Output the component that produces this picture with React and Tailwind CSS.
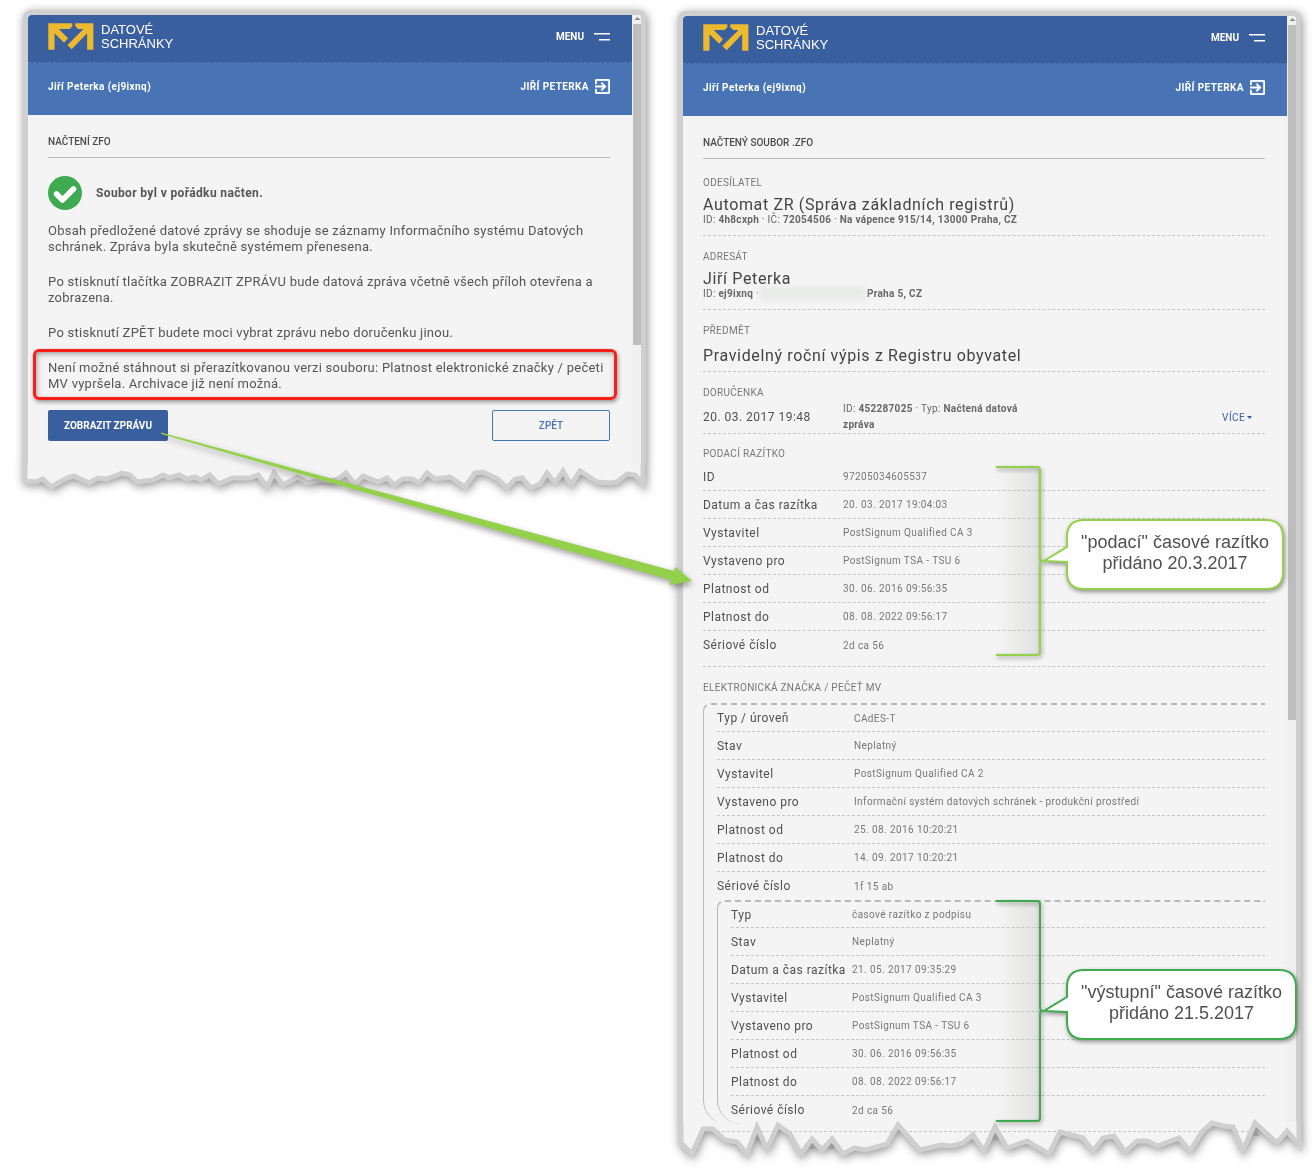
import clsx from 'clsx';

const STAMP = [
  ['ID', '97205034605537'],
  ['Datum a čas razítka', '20. 03. 2017 19:04:03'],
  ['Vystavitel', 'PostSignum Qualified CA 3'],
  ['Vystaveno pro', 'PostSignum TSA - TSU 6'],
  ['Platnost od', '30. 06. 2016 09:56:35'],
  ['Platnost do', '08. 08. 2022 09:56:17'],
  ['Sériové číslo', '2d ca 56'],
];

const SEAL = [
  ['Typ / úroveň', 'CAdES-T'],
  ['Stav', 'Neplatný'],
  ['Vystavitel', 'PostSignum Qualified CA 2'],
  ['Vystaveno pro', 'Informační systém datových schránek - produkční prostředí'],
  ['Platnost od', '25. 08. 2016 10:20:21'],
  ['Platnost do', '14. 09. 2017 10:20:21'],
  ['Sériové číslo', '1f 15 ab'],
];

const SEAL_STAMP = [
  ['Typ', 'časové razítko z podpisu'],
  ['Stav', 'Neplatný'],
  ['Datum a čas razítka', '21. 05. 2017 09:35:29'],
  ['Vystavitel', 'PostSignum Qualified CA 3'],
  ['Vystaveno pro', 'PostSignum TSA - TSU 6'],
  ['Platnost od', '30. 06. 2016 09:56:35'],
  ['Platnost do', '08. 08. 2022 09:56:17'],
  ['Sériové číslo', '2d ca 56'],
];

// Torn paper edges
const TEAR_LEFT =
  '25,481 35,482 43,479 51,487 67,478 74,476 89,483 98,478 107,479 122,473 130,475 137,482 153,480 163,475 169,478 179,475 187,479 195,477 201,480 210,475 218,484 233,478 250,478 258,475 267,487 274,473 283,485 298,477 307,483 320,480 330,481 338,479 346,473 355,484 363,476 378,482 387,478 394,485 403,479 412,479 419,483 427,473 435,479 450,477 465,487 475,473 483,472 498,479 507,488 515,479 522,478 531,488 540,484 547,473 555,483 563,471 571,485 580,471 597,482 610,483 617,482 627,474 635,475 643,484';
const TEAR_RIGHT =
  '681,1143 692,1154 703,1129 713,1129 725,1140 737,1142 747,1154 757,1127 767,1149 778,1125 790,1134 801,1154 812,1139 822,1150 832,1139 843,1154 854,1148 866,1150 887,1144 898,1125 920,1150 941,1145 952,1146 963,1143 973,1135 984,1151 995,1127 1007,1148 1027,1141 1049,1154 1060,1132 1083,1138 1093,1151 1103,1138 1114,1136 1125,1152 1137,1141 1147,1141 1158,1146 1179,1138 1190,1151 1202,1132 1212,1123 1223,1126 1233,1127 1243,1150 1255,1123 1277,1143 1287,1131 1299,1145';

// ─── Icons ───────────────────────────────────────────────────────────────────
function Logo() {
  return (
    <svg viewBox="0 0 138 82" className="h-[27px] w-[46px]" fill="#ecb92f" aria-hidden="true">
      <path d="M0 1H73V10L65 18H32L60 46L48 60L19 31V81H0Z" />
      <path d="M82 1H137V81H118V31L71 80L58 67L107 18H91L82 10Z" />
    </svg>
  );
}

function ExitIcon() {
  return (
    <svg viewBox="3 3 18 18" className="size-[15px]" fill="currentColor" aria-hidden="true">
      <path
        d="M10.09 15.59 11.5 17l5-5-5-5-1.41 1.41L12.67 11H3v2h9.67zM19 3H5c-1.11 0-2 .9-2 2v4h2V5h14v14H5v-4H3v4c0 1.1.89 2 2 2h14c1.1 0 2-.9 2-2V5c0-1.1-.9-2-2-2z"
        stroke="currentColor"
        strokeWidth="0.5"
      />
    </svg>
  );
}

function CheckIcon() {
  return (
    <svg viewBox="0 0 34 34" className="size-[34px] shrink-0" aria-hidden="true">
      <circle cx="17" cy="17" r="17" fill="#3faa50" />
      <path d="M8.500 18 14.500 24 25.500 13" fill="none" stroke="#fff" strokeWidth="5.500" strokeLinecap="round" strokeLinejoin="round" />
    </svg>
  );
}

// ─── Window frame ────────────────────────────────────────────────────────────
function Tear({ points, viewBox, top, className, children }) {
  const pts = points.split(' ');
  const first = pts[0].split(',')[0];
  const last = pts[pts.length - 1].split(',')[0];
  return (
    <svg viewBox={viewBox} preserveAspectRatio="none" className={clsx('block w-full overflow-visible', className)} aria-hidden="true">
      <polygon points={`${first},${top} ${points} ${last},${top}`} fill="#f4f4f4" />
      {children}
      <polyline points={`${first},${top} ${points} ${last},${top}`} fill="none" stroke="#cfcfcf" strokeWidth="5" />
    </svg>
  );
}

function Window({ title, thumb, tear, className, children }) {
  return (
    <section className={clsx('min-w-0 drop-shadow-[1px_2px_5px_rgba(0,0,0,0.45)]', className)}>
      <div className="flex rounded-t-lg border-x-5 border-t-5 border-[#cfcfcf] bg-[#f4f4f4]">
        <div className="min-w-0 flex-1">
          <header className="text-[10px] font-bold text-white">
            <div className="flex h-12 items-center justify-between rounded-tl border-b border-dashed border-[#5478b4] bg-[#3a5f9f] pr-[22px] pb-1 pl-5">
              <a href="#" className="flex items-center gap-[7px]">
                <Logo />
                <span className="font-['Liberation_Sans',sans-serif] text-[13px] leading-[14px] font-normal">
                  DATOVÉ<br />SCHRÁNKY
                </span>
              </a>
              <button className="flex items-center gap-2.5 font-bold">
                MENU
                <svg viewBox="0 0 16 10" className="h-2.5 w-4" fill="#fff" aria-hidden="true">
                  <path d="M0 1h16v1.500H0zM5 7h11v1.500H5z" />
                </svg>
              </button>
            </div>
            <div className="flex h-[52px] items-center justify-between bg-[#4874b6] pr-[22px] pb-1.5 pl-5">
              <span className="tracking-[0.04em]">Jiří Peterka (ej9ixnq)</span>
              <button className="flex items-center gap-1.5 font-bold tracking-[0.04em]">
                JIŘÍ PETERKA
                <ExitIcon />
              </button>
            </div>
          </header>
          <div className="pr-[22px] pl-5">
            <h1 className="flex h-[43px] items-center border-b border-[#b9b9b9] pt-[11px] text-[10px] font-medium text-[#4a4a4a]">{title}</h1>
            {children}
          </div>
        </div>
        <div className="w-[9px] rounded-tr bg-[#f0f0f0] pl-px">
          <svg viewBox="0 0 8 9" className="block h-[9px] w-2" aria-hidden="true">
            <path d="M1.500 5 4.500 2 7.500 5z" fill="#8d8d8d" />
          </svg>
          <div className={clsx('bg-[#bdbdbd]', thumb)} />
        </div>
      </div>
      {tear}
    </section>
  );
}

// ─── Detail rows ─────────────────────────────────────────────────────────────
function Label({ children }) {
  return <h2 className="text-[10px] leading-4 tracking-[0.03em] text-[#777]">{children}</h2>;
}

function Rows({ rows, labelWidth, firstHeight = 'h-7' }) {
  return rows.map(([label, value], i) => (
    <div
      key={label}
      className={clsx(
        'flex items-center',
        i === 0 ? firstHeight : 'h-7',
        i < rows.length - 1 && 'border-b border-dashed border-[#c6c6c6]',
      )}
    >
      <dt className={clsx('shrink-0 text-xs tracking-[0.04em] whitespace-nowrap text-[#505050]', labelWidth)}>{label}</dt>
      <dd className="text-[10px] tracking-[0.04em] text-[#777]">{value}</dd>
    </div>
  ));
}

function Section({ label, children, className }) {
  return (
    <section className={clsx('border-b border-dashed border-[#c6c6c6]', className)}>
      <Label>{label}</Label>
      {children}
    </section>
  );
}

function Headline({ children, className }) {
  return <p className={clsx('text-base leading-5 tracking-[0.04em] text-[#444]', className)}>{children}</p>;
}

function Group({ children, className }) {
  return (
    <div className={clsx('rounded-tl-lg rounded-bl-[24px] border-t-2 border-l border-[#b9b9b9] pl-[13px] [border-top-style:dashed]', className)}>
      {children}
    </div>
  );
}

// Bracket around a block of rows with a speech bubble pointing at its middle
function Callout({ id, color, height, width, className, children }) {
  const mid = 6 + height / 2;
  const end = 6 + height;
  const top = mid - 41;
  const bottom = mid + 28;
  const right = 77 + width;
  return (
    <div className={clsx('absolute -right-[35px] w-[310px]', className)}>
      <svg width="310" height={height + 14} className="block overflow-visible" aria-hidden="true">
        <defs>
          <linearGradient id={id}>
            <stop offset="0" stopColor="#b4bcae" stopOpacity="0" />
            <stop offset="1" stopColor="#b4b8b2" stopOpacity="0.3" />
          </linearGradient>
        </defs>
        <rect x="6" y="6" width="44" height={height} fill={`url(#${id})`} />
        <g className="drop-shadow-[1px_2px_2px_rgba(0,0,0,0.4)]" stroke={color}>
          <path
            d={`M6 6H47Q50 6 50 9V${mid - 3}Q50 ${mid} 53 ${mid}Q50 ${mid} 50 ${mid + 3}V${end - 3}Q50 ${end} 47 ${end}H6`}
            fill="none"
            strokeWidth="2"
          />
          <path
            d={`M${77 + 17} ${top}H${right - 17}Q${right} ${top} ${right} ${top + 17}V${bottom - 17}Q${right} ${bottom} ${right - 17} ${bottom}H94Q77 ${bottom} 77 ${bottom - 17}V${mid + 1}L54 ${mid}L77 ${mid - 14}V${top + 17}Q77 ${top} 94 ${top}Z`}
            fill="#fff"
            strokeWidth="2"
          />
        </g>
      </svg>
      <p
        className="absolute text-center font-['Liberation_Sans',sans-serif] text-lg leading-[21px] text-[#505050]"
        style={{ left: 77, top: top + 12, width }}
      >
        {children}
      </p>
    </div>
  );
}

export default function App() {
  return (
    <main className="relative grid min-h-screen grid-cols-2 items-start gap-8 bg-white pt-2.5 pr-[11px] pl-[23px] font-[Roboto,sans-serif]">
      <Window
        title="NAČTENÍ ZFO"
        thumb="h-[321px]"
        tear={<Tear points={TEAR_LEFT} viewBox="23 465 623 30" top={464} className="h-[30px]" />}
      >
        <div className="mt-[18px] flex items-center gap-3.5 text-xs font-bold tracking-[0.03em] text-[#555]">
          <CheckIcon />
          Soubor byl v pořádku načten.
        </div>
        <div className="mt-[13px] space-y-[19px] text-[13px] leading-4 tracking-[0.02em] text-[#555]">
          <p>
            Obsah předložené datové zprávy se shoduje se záznamy Informačního systému Datových
            schránek. Zpráva byla skutečně systémem přenesena.
          </p>
          <p>Po stisknutí tlačítka ZOBRAZIT ZPRÁVU bude datová zpráva včetně všech příloh otevřena a zobrazena.</p>
          <p>Po stisknutí ZPĚT budete moci vybrat zprávu nebo doručenku jinou.</p>
          <p className="relative">
            Není možné stáhnout si přerazítkovanou verzi souboru: Platnost elektronické značky / pečeti
            MV vypršela. Archivace již není možná.
            <span className="absolute -top-[11px] -right-[7px] -bottom-2 -left-[15px] rounded-md border-3 border-[#fa1d1a] shadow-[1px_2px_4px_rgba(0,0,0,0.4),inset_1px_2px_5px_rgba(0,0,0,0.35)]" />
          </p>
        </div>
        <div className="mt-[18px] flex justify-between pb-6 text-[10px]">
          <button className="h-[31px] w-[120px] rounded-xs bg-[#3a5f9f] font-bold text-white">ZOBRAZIT ZPRÁVU</button>
          <button className="h-[31px] w-[118px] rounded-xs border border-[#4874b6] font-medium text-[#4874b6]">ZPĚT</button>
        </div>
      </Window>

      <Window
        title="NAČTENÝ SOUBOR .ZFO"
        thumb="h-[695px]"
        className="mt-px"
        tear={
          <Tear points={TEAR_RIGHT} viewBox="678 1124 623 38" top={1122} className="h-[38px]">
            <path d="M717 1131.500H750M761 1131.500H774M784 1131.500H892M904 1131.500H992M998 1131.500H1200M1236 1131.500H1250M1262 1131.500H1265" stroke="#c6c6c6" strokeDasharray="3 2" />
            <path d="M757 1132l3 8h-6zM812 1144l3 5h-6zM832 1144l3 5h-6zM995 1132l3 8h-6zM1255 1128l4 8h-6z" fill="#9b9b9b" />
          </Tear>
        }
      >
        <Section label="ODESÍLATEL" className="pt-4 pb-2.5">
          <Headline className="mt-1">Automat ZR (Správa základních registrů)</Headline>
          <p className="text-[10px] leading-[10px] tracking-[0.03em] text-[#666]">
            ID: <b>4h8cxph</b> · IČ: <b>72054506</b> · <b>Na vápence 915/14, 13000 Praha, CZ</b>
          </p>
        </Section>
        <Section label="ADRESÁT" className="pt-[13px] pb-2.5">
          <Headline className="mt-1">Jiří Peterka</Headline>
          <p className="flex items-center text-[10px] leading-[10px] tracking-[0.03em] text-[#666]">
            <span>ID: <b>ej9ixnq</b> ·</span>
            <span className="mx-px -my-1 h-3.5 w-[106px] bg-[#e9ebe9] blur-[2px]" />
            <b>Praha 5, CZ</b>
          </p>
        </Section>
        <Section label="PŘEDMĚT" className="pt-[13px] pb-[5px]">
          <Headline className="mt-[7px]">Pravidelný roční výpis z Registru obyvatel</Headline>
        </Section>
        <Section label="DORUČENKA" className="pt-[13px]">
          <div className="flex items-center">
            <p className="w-[140px] text-xs tracking-[0.04em] text-[#505050]">20. 03. 2017 19:48</p>
            <p className="w-[190px] text-[10px] leading-4 tracking-[0.03em] text-[#666]">
              ID: <b>452287025</b> · Typ: <b>Načtená datová</b> <b>zpráva</b>
            </p>
            <button className="mr-[13px] ml-auto flex items-center gap-0.5 text-[10px] tracking-[0.04em] text-[#3a5f9f]">
              VÍCE
              <svg viewBox="0 0 5 3" className="h-[3px] w-[5px]" aria-hidden="true"><path d="M0 0h5L2.500 3z" fill="#3a5f9f" /></svg>
            </button>
          </div>
        </Section>
        <Section label="PODACÍ RAZÍTKO" className="pt-3 pb-[7px]">
          <dl className="relative mt-px">
            <Rows rows={STAMP} labelWidth="w-[140px]" />
            <Callout id="shade-in" color="#94d14a" height={188} width={216} className="-top-0.5">
              "podací" časové razítko<br />přidáno 20.3.2017
            </Callout>
          </dl>
        </Section>
        <section className="pt-[13px]">
          <Label>ELEKTRONICKÁ ZNAČKA / PEČEŤ MV</Label>
          <Group className="mt-[7px]">
            <dl><Rows rows={SEAL} labelWidth="w-[137px]" firstHeight="h-[27px]" /></dl>
            <Group className="relative">
              <dl><Rows rows={SEAL_STAMP} labelWidth="w-[121px]" firstHeight="h-[26px]" /></dl>
              <Callout id="shade-out" color="#3faa50" height={220} width={229} className="-top-[7px]">
                "výstupní" časové razítko<br />přidáno 21.5.2017
              </Callout>
            </Group>
          </Group>
        </section>
      </Window>

      {/* Arrow from the button to the opened message */}
      <svg
        viewBox="155 425 545 170"
        className="pointer-events-none absolute top-[425px] left-[155px] h-[170px] w-[545px] drop-shadow-[1px_3px_3px_rgba(0,0,0,0.4)]"
        aria-hidden="true"
      >
        <path d="M161 432.500 674 571 675 567 692 581 670 585 671 580 161 434Z" fill="#94d14a" />
      </svg>
    </main>
  );
}
